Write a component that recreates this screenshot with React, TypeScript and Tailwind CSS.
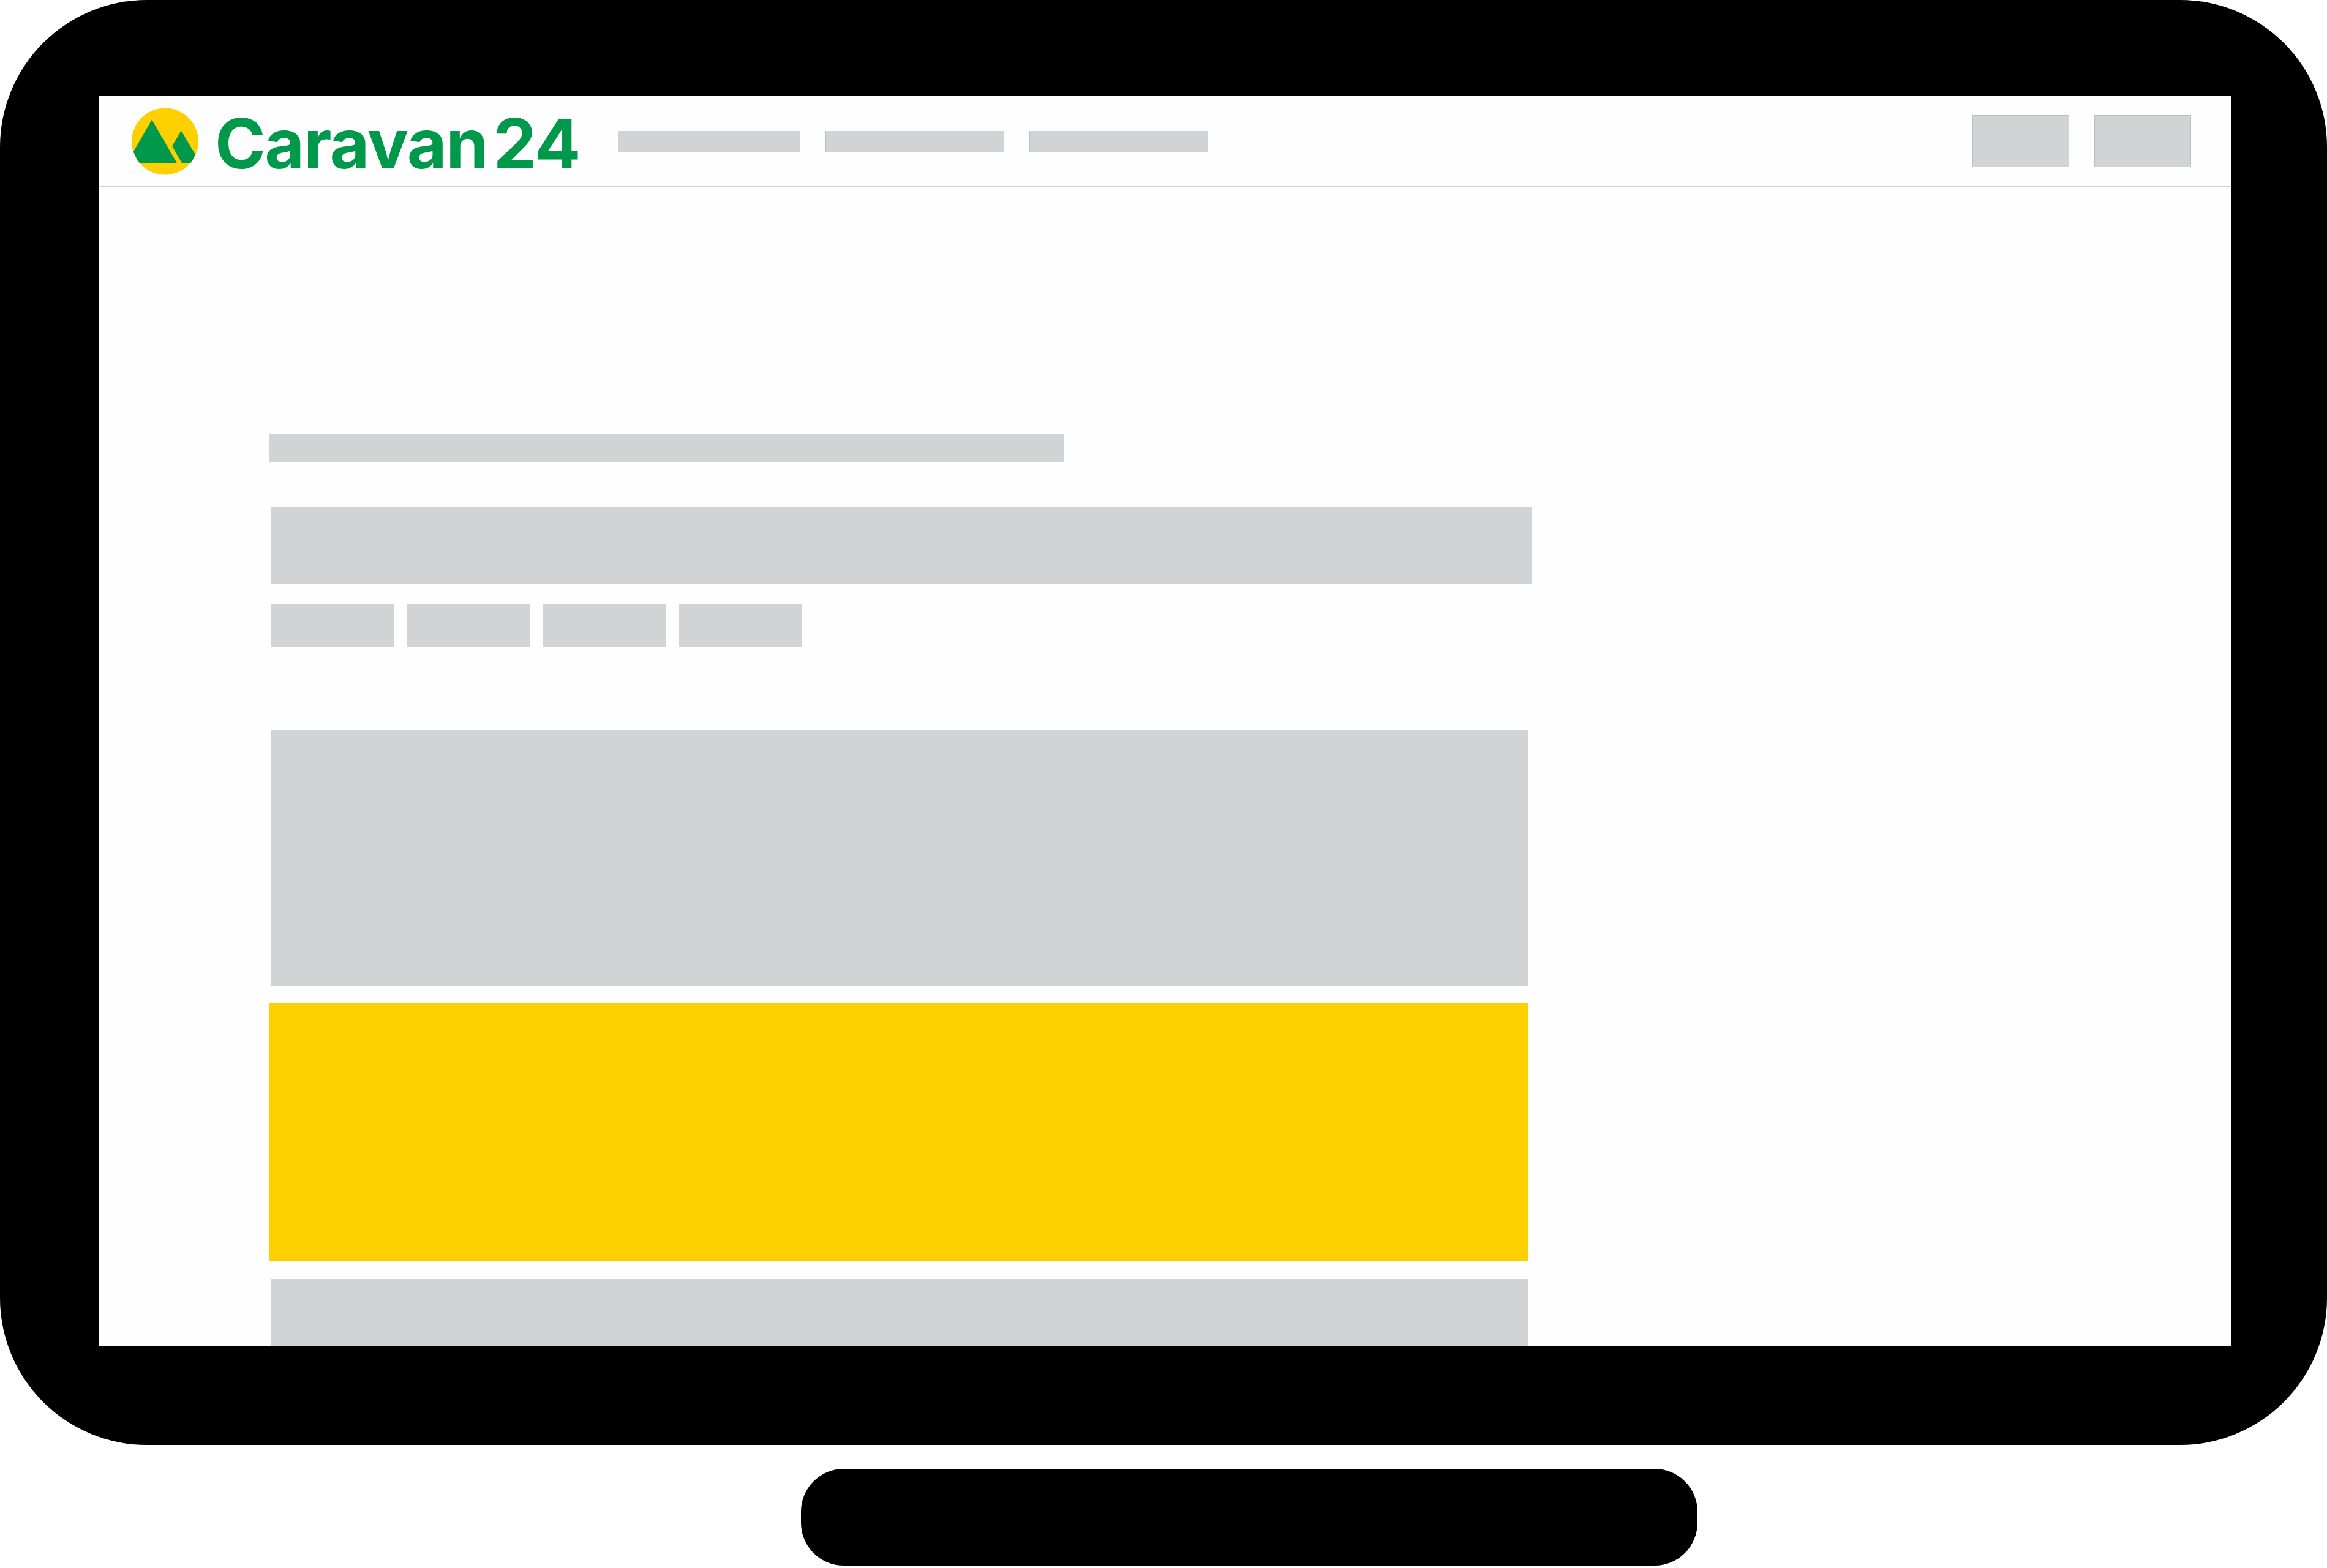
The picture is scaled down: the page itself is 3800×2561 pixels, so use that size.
import React from 'react';

function Block({ className = '' }: { className?: string }) {
    return <div className={`bg-[#d1d3d4] ${className}`} />
}

function Logo() {
    return (
        <svg viewBox="0 0 109 110" className="w-[109px] h-[110px] shrink-0">
            <circle cx="54.5" cy="55" r="54.5" fill="#ffd000" />
            <path d="M33 19.5 L74 90.5 L13 90.5 Q6 81 3 71.5 Z" fill="#00984a" />
            <path d="M81 37.5 L104 76.5 Q101 84 96 90.5 L82 90.5 L66 62.5 Z" fill="#00984a" />
        </svg>
    )
}

export default function App() {
    return (
        <div className="w-[3800px] h-[2561px] bg-white flex flex-col">
            <div className="h-[2360px] rounded-[240px] bg-black pt-[156px] pl-[162px] pr-[157px] pb-[161px]">
                <div className="h-full bg-[#fefefe] flex flex-col overflow-hidden">
                    <div className="h-[150px] shrink-0 border-b-[3px] border-[#d1d1d1] flex items-center pt-[2px] pl-[53px] pr-[65px]">
                        <Logo />
                        <div className="ml-[27px] mt-[7px] w-[601px] shrink-0 font-['Inter',sans-serif] font-bold text-[112px] leading-none tracking-[-1.5px] [word-spacing:-16px] text-[#00984a] whitespace-nowrap">
                            Caravan 24
                        </div>
                        <div className="flex gap-[41px] ml-[57px] mt-[2px]">
                            <Block className="w-[298px] h-[35px] border-x border-b border-[#bcbec0]" />
                            <Block className="w-[292px] h-[35px] border-x border-b border-[#bcbec0]" />
                            <Block className="w-[292px] h-[35px] border-x border-b border-[#bcbec0]" />
                        </div>
                        <div className="flex gap-[41px] ml-auto">
                            <Block className="w-[158px] h-[85px] border border-[#bcbec0]" />
                            <Block className="w-[158px] h-[85px] border border-[#bcbec0]" />
                        </div>
                    </div>
                    <div className="flex flex-col items-start pt-[403px]">
                        <Block className="ml-[277px] w-[1299px] h-[46px]" />
                        <Block className="ml-[281px] mt-[73px] w-[2058px] h-[126px]" />
                        <div className="flex gap-[22.5px] ml-[281px] mt-[32px]">
                            <Block className="w-[199.5px] h-[71px]" />
                            <Block className="w-[199.5px] h-[71px]" />
                            <Block className="w-[199.5px] h-[71px]" />
                            <Block className="w-[199.5px] h-[71px]" />
                        </div>
                        <Block className="ml-[281px] mt-[136px] w-[2052px] h-[418px] shrink-0" />
                        <div className="ml-[277px] mt-[28px] w-[2056px] h-[421px] shrink-0 bg-[#ffd000]" />
                        <Block className="ml-[281px] mt-[29px] w-[2052px] h-[200px] shrink-0" />
                    </div>
                </div>
            </div>
            <div className="ml-[1308px] mt-[39px] w-[1464px] h-[158px] rounded-[70px] bg-black" />
        </div>
    )
}
